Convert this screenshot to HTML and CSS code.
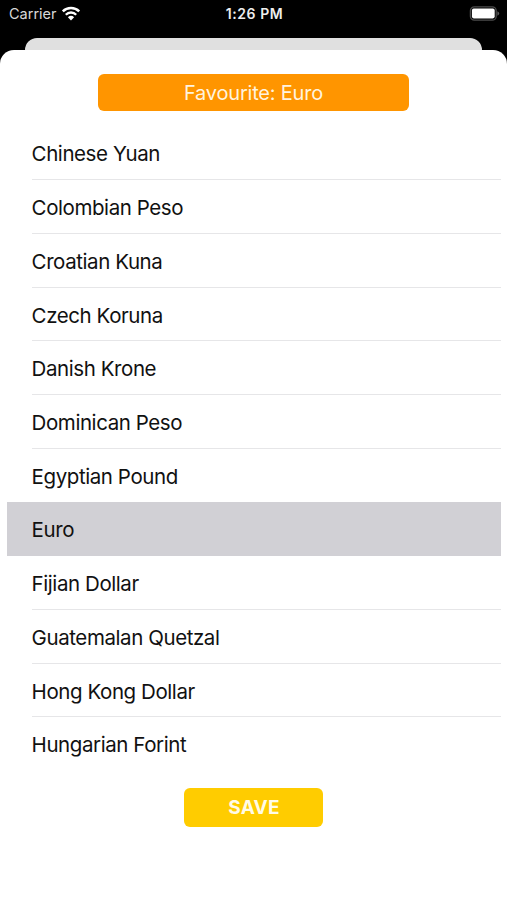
FILE: index.html
```html
<!DOCTYPE html>
<html lang="en">
<head>
    <meta charset="UTF-8">
    <meta name="viewport" content="width=device-width, initial-scale=1.0">
    <title>Favourite Currency</title>
    <link rel="stylesheet" href="styles.css">
</head>
<body>
    <header class="status-bar">
        <div class="carrier">
            <span>Carrier</span>
            <svg class="wifi" viewBox="0 0 20 15" width="20" height="15">
                <path d="M1.8 5.4 A11.6 11.6 0 0 1 18.2 5.4" fill="none" stroke="#fff" stroke-width="2.5"/>
                <path d="M4.8 8.7 A7.3 7.3 0 0 1 15.2 8.7" fill="none" stroke="#fff" stroke-width="2.3"/>
                <path d="M10 14.4 L6.9 11.2 A4.6 4.6 0 0 1 13.1 11.2 Z" fill="#fff"/>
            </svg>
        </div>
        <div class="time">1:26 PM</div>
        <div class="battery-box">
            <svg viewBox="0 0 31 15" width="31" height="15">
                <rect x="1.4" y="0.8" width="25.8" height="13.4" rx="4" fill="none" stroke="#4c4c4c" stroke-width="1.3"/>
                <rect x="2.9" y="2.6" width="22.8" height="9.8" rx="1.8" fill="#fff"/>
                <path d="M28.4 5.2 Q30.2 6 30.2 7.5 Q30.2 9 28.4 9.8 Z" fill="#5c5c5c"/>
            </svg>
        </div>
    </header>

    <div class="back-card"></div>

    <main class="sheet">
        <div class="favourite">Favourite: Euro</div>
        <ul class="currency-list">
            <li><span>Chinese Yuan</span></li>
            <li><span>Colombian Peso</span></li>
            <li><span>Croatian Kuna</span></li>
            <li><span>Czech Koruna</span></li>
            <li><span>Danish Krone</span></li>
            <li><span>Dominican Peso</span></li>
            <li class="no-line"><span>Egyptian Pound</span></li>
            <li class="selected no-line"><span>Euro</span></li>
            <li><span>Fijian Dollar</span></li>
            <li><span>Guatemalan Quetzal</span></li>
            <li><span>Hong Kong Dollar</span></li>
            <li class="no-line"><span>Hungarian Forint</span></li>
        </ul>
        <button class="save">SAVE</button>
    </main>
</body>
</html>
```

FILE: styles.css
```css
* {
    box-sizing: border-box;
}
body {
    font-family: Inter, "Liberation Sans", sans-serif;
    background-color: #000;
    margin: 0;
    height: 900px;
    display: flex;
    flex-direction: column;
    overflow: hidden;
}
.status-bar {
    height: 38px;
    padding: 0 7px 11px 9px;
    display: grid;
    grid-template-columns: 1fr auto 1fr;
    align-items: center;
    color: #fff;
    flex-shrink: 0;
}
.carrier {
    display: flex;
    align-items: center;
    gap: 4px;
    font-size: 14.5px;
    color: #d8d8d8;
}
.wifi {
    margin-bottom: 1px;
}
.time {
    font-size: 14px;
    font-weight: 600;
    letter-spacing: 0.6px;
    color: #eee;
}
.battery-box {
    display: flex;
    justify-content: flex-end;
    padding-bottom: 1px;
}
.back-card {
    height: 12px;
    margin: 0 25px;
    background-color: #e0e0e0;
    border-radius: 12px 12px 0 0;
    flex-shrink: 0;
}
.sheet {
    flex: 1;
    background-color: #fff;
    border-radius: 14px 14px 0 0;
    padding: 24px 6px 0 7px;
    display: flex;
    flex-direction: column;
    align-items: center;
}
.favourite {
    width: 311px;
    height: 37px;
    line-height: 38px;
    margin-right: 1px;
    border-radius: 6px;
    background-color: #ff9500;
    color: #fff3df;
    font-size: 20px;
    letter-spacing: -0.2px;
    text-align: center;
}
.currency-list {
    list-style: none;
    width: 100%;
    margin: 15.4px 0 16.6px;
    padding: 0;
}
.currency-list li {
    height: 53.73px;
    padding-left: 24.6px;
}
.currency-list span {
    display: block;
    height: 100%;
    line-height: 55px;
    font-size: 20.5px;
    letter-spacing: -0.42px;
    color: #111;
    border-bottom: 1px solid #e6e6e8;
}
.currency-list .no-line span {
    border-bottom: none;
}
.currency-list .selected {
    background-color: #d1d0d5;
}
.save {
    width: 139px;
    height: 39px;
    margin-right: 1px;
    padding: 0 0 0 1px;
    border: none;
    border-radius: 6px;
    background-color: #ffcc00;
    color: #fffbe8;
    font-family: inherit;
    font-size: 19px;
    font-weight: 700;
    letter-spacing: 0.2px;
}
```
